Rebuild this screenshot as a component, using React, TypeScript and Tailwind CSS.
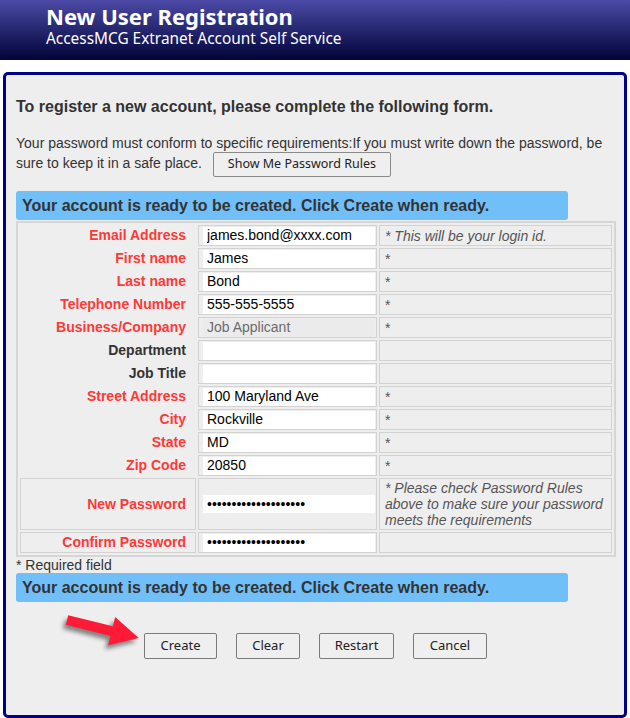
import React from 'react';

type Row = {
  label: string;
  req: boolean;
  value: string;
  note?: string;
  italic?: boolean;
  disabled?: boolean;
  password?: boolean;
  boxed?: boolean;
  tall?: boolean;
};

const rows: Row[] = [
  { label: 'Email Address', req: true, value: 'james.bond@xxxx.com', note: '* This will be your login id.', italic: true },
  { label: 'First name', req: true, value: 'James', note: '*' },
  { label: 'Last name', req: true, value: 'Bond', note: '*' },
  { label: 'Telephone Number', req: true, value: '555-555-5555', note: '*' },
  { label: 'Business/Company', req: true, value: 'Job Applicant', note: '*', disabled: true },
  { label: 'Department', req: false, value: '' },
  { label: 'Job Title', req: false, value: '' },
  { label: 'Street Address', req: true, value: '100 Maryland Ave', note: '*' },
  { label: 'City', req: true, value: 'Rockville', note: '*' },
  { label: 'State', req: true, value: 'MD', note: '*' },
  { label: 'Zip Code', req: true, value: '20850', note: '*' },
  {
    label: 'New Password',
    req: true,
    value: 'xxxxxxxxxxxxxxxxxxxx',
    password: true,
    boxed: true,
    tall: true,
    note: '* Please check Password Rules above to make sure your password meets the requirements',
    italic: true,
  },
  { label: 'Confirm Password', req: true, value: 'xxxxxxxxxxxxxxxxxxxx', password: true, boxed: true },
];

const arial = "font-['Liberation_Sans',Arial,sans-serif]";
const ui = "font-['Noto_Sans',sans-serif]";

function Banner() {
  return (
    <div className={`w-[552px] h-[29px] bg-[#71bff9] rounded-[3px] pl-[6px] flex items-center text-[16px] font-bold text-[#333] ${arial}`}>
      Your account is ready to be created. Click Create when ready.
    </div>
  );
}

export default function App() {
  return (
    <div className="relative w-[630px] h-[718px] bg-white overflow-hidden">
      <div className="h-[60px] bg-gradient-to-b from-[#4d4ba7] to-[#05033a] pl-[46px] pt-[3px] text-white">
        <div className={`h-[26px] flex items-center text-[22px] leading-none font-bold ${ui}`}>New User Registration</div>
        <div className={`h-[19px] flex items-center text-[15.4px] leading-none ${ui}`}>AccessMCG Extranet Account Self Service</div>
      </div>

      <div className="mt-[12px] mx-[3px] h-[646px] border-[3px] border-[#00008b] rounded-[5px] bg-[#eeeeee] pl-[10px] pt-[23px]">
        <div className={`text-[16px] leading-[18px] font-bold text-[#333] ${arial}`}>
          To register a new account, please complete the following form.
        </div>
        <div className={`mt-[17px] pr-[14px] text-[14px] leading-[20px] text-[#333] ${arial}`}>
          Your password must conform to specific requirements:If you must write down the password, be sure to keep it in a safe place.{' '}
          <button className={`ml-[7px] inline-block align-middle -my-[4px] h-[25px] w-[178px] border border-[#8a8a8a] rounded-[2px] bg-[#efefef] text-[12.5px] text-[#222] ${ui}`}>
            Show Me Password Rules
          </button>
        </div>

        <div className="mt-[18px]">
          <Banner />
        </div>

        <div className="mt-[1px] w-[600px] border-[2px] border-[#d6d6d6] p-[2px] grid grid-cols-[176px_179px_1fr] gap-[2px]">
          {rows.map((r) => (
            <React.Fragment key={r.label}>
              <div
                className={`${r.tall ? 'min-h-[52px]' : 'h-[21px]'} border ${r.boxed ? 'border-[#d2d2d2]' : 'border-transparent'} flex items-center justify-end pr-[9px] text-[14px] font-bold ${arial} ${r.req ? 'text-[#ff3838]' : 'text-[#333]'}`}
              >
                {r.label}
              </div>
              <div className={`${r.tall ? 'min-h-[52px]' : 'h-[21px]'} border border-[#d2d2d2] flex items-center pl-[4px] pr-[1px]`}>
                <input
                  readOnly
                  type={r.password ? 'password' : 'text'}
                  defaultValue={r.value}
                  className={`w-full h-[18px] px-[4px] text-[14px] outline-none ${arial} ${r.disabled ? 'bg-[#ebebeb] text-[#6b6b6b]' : 'bg-white text-black'}`}
                />
              </div>
              <div
                className={`${r.tall ? 'min-h-[52px] py-[1px]' : 'h-[21px]'} border border-[#d2d2d2] flex items-center pl-[5px] pr-[4px] text-[14px] leading-[16px] text-[#555] ${arial} ${r.italic ? 'italic text-[#444]' : ''}`}
              >
                {r.note ?? ''}
              </div>
            </React.Fragment>
          ))}
        </div>

        <div className={`text-[14px] leading-[16px] text-[#333] ${arial}`}>* Required field</div>
        <Banner />

        <div className={`mt-[31px] pl-[128px] flex gap-[19px] text-[13px] text-[#222] ${ui}`}>
          <button className="w-[73px] h-[26px] border border-[#7a7a7a] rounded-[2px] bg-[#efefef]">Create</button>
          <button className="w-[64px] h-[26px] border border-[#7a7a7a] rounded-[2px] bg-[#efefef]">Clear</button>
          <button className="w-[75px] h-[26px] border border-[#7a7a7a] rounded-[2px] bg-[#efefef]">Restart</button>
          <button className="w-[74px] h-[26px] border border-[#7a7a7a] rounded-[2px] bg-[#efefef]">Cancel</button>
        </div>
      </div>

      <svg
        className="absolute left-[50px] top-[595px] pointer-events-none drop-shadow-[-3px_4px_2px_rgba(0,0,0,0.45)]"
        width="110"
        height="70"
        viewBox="0 0 110 70"
      >
        <g transform="translate(17 25) rotate(14)">
          <polygon points="0,-5 46,-5 46,-14.5 74,0 46,14.5 46,5 0,5" fill="#ff1a35" />
        </g>
      </svg>
    </div>
  );
}
